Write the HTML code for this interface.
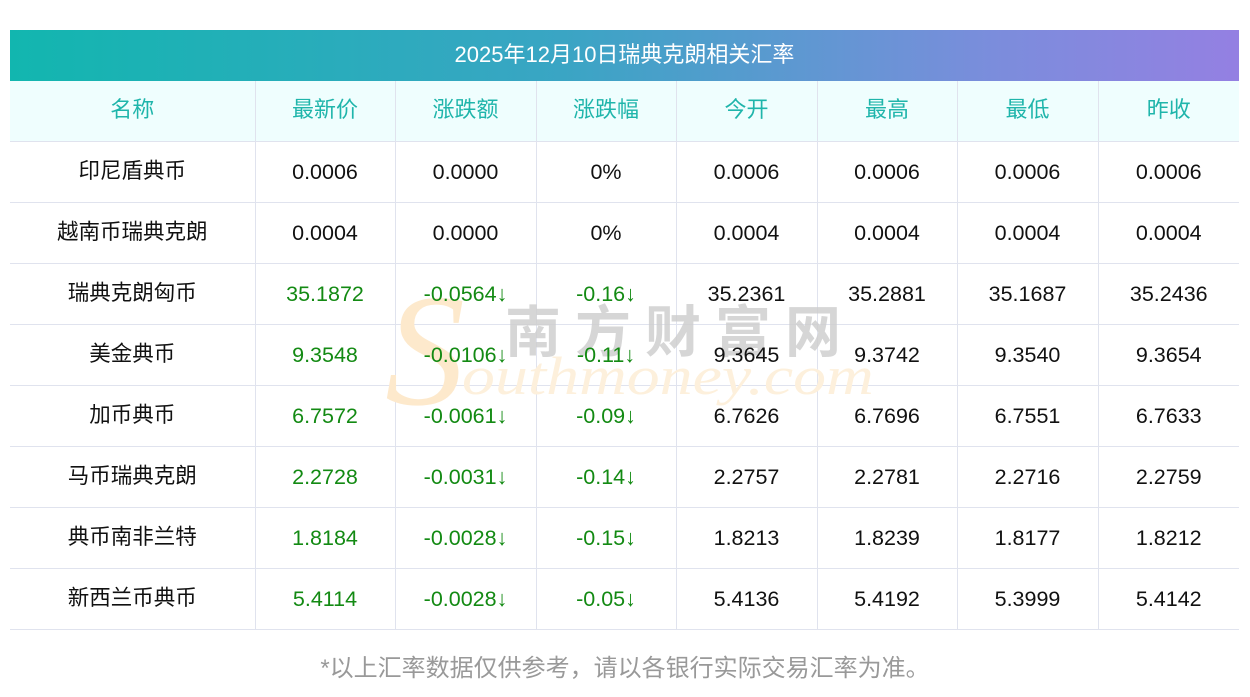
<!DOCTYPE html><html><head><meta charset="utf-8"><style>
body{margin:0;width:1250px;height:697px;background:#fff;font-family:"Liberation Sans","Noto Sans CJK SC",sans-serif;position:relative;overflow:hidden}
.bar{position:absolute;left:10px;top:30px;width:1229px;height:51px;background:linear-gradient(90deg,#12b6af,#3aa5c4 45%,#7b8ddc 80%,#9480e2);color:#fff;font-size:22px;line-height:49px;text-align:center}
table{position:absolute;left:10px;top:81px;border-collapse:collapse;width:1229px;table-layout:fixed}
td{height:60px;border:1px solid #e0e3ee;text-align:center;font-size:21.5px;color:#111;padding:0;position:relative;z-index:2}
tr td:first-child{border-left:none}tr td:last-child{border-right:none}
tr:first-child td{border-top:none;background:#effefe;color:#1fb5ab;font-size:22px}
.c span{position:relative;top:-3px}
.g{color:#138a13}
.wm1{position:absolute;left:505px;top:288px;font-size:56px;color:#cfcfcf;letter-spacing:14px;font-weight:bold;z-index:1;opacity:.85;font-family:"Noto Sans CJK SC",sans-serif}
.wm2{position:absolute;left:462px;top:345px;font-size:54px;font-family:"Liberation Serif",serif;font-style:italic;color:#fdf0dc;z-index:1;transform:scaleX(1.22);transform-origin:left top}
.S{position:absolute;left:385px;top:270px;font-size:160px;font-family:"Liberation Serif",serif;font-style:italic;color:#fde9cc;z-index:1;line-height:160px}
.note{position:absolute;top:648px;left:0;width:1250px;text-align:center;font-size:24px;color:#999}
</style></head><body>
<div class="bar">2025年12月10日瑞典克朗相关汇率</div>
<div class="S">S</div><div class="wm1">南方财富网</div><div class="wm2">outhmoney.com</div>
<table>
<colgroup><col style="width:245px"><col style="width:140px"><col style="width:141px"><col style="width:140px"><col style="width:141px"><col style="width:140px"><col style="width:141px"><col style="width:141px"></colgroup>
<tr class="c"><td><span>名称</span></td><td><span>最新价</span></td><td><span>涨跌额</span></td><td><span>涨跌幅</span></td><td><span>今开</span></td><td><span>最高</span></td><td><span>最低</span></td><td><span>昨收</span></td></tr>
<tr><td class="c"><span>印尼盾典币</span></td><td>0.0006</td><td>0.0000</td><td>0%</td><td>0.0006</td><td>0.0006</td><td>0.0006</td><td>0.0006</td></tr>
<tr><td class="c"><span>越南币瑞典克朗</span></td><td>0.0004</td><td>0.0000</td><td>0%</td><td>0.0004</td><td>0.0004</td><td>0.0004</td><td>0.0004</td></tr>
<tr><td class="c"><span>瑞典克朗匈币</span></td><td class="g">35.1872</td><td class="g">-0.0564↓</td><td class="g">-0.16↓</td><td>35.2361</td><td>35.2881</td><td>35.1687</td><td>35.2436</td></tr>
<tr><td class="c"><span>美金典币</span></td><td class="g">9.3548</td><td class="g">-0.0106↓</td><td class="g">-0.11↓</td><td>9.3645</td><td>9.3742</td><td>9.3540</td><td>9.3654</td></tr>
<tr><td class="c"><span>加币典币</span></td><td class="g">6.7572</td><td class="g">-0.0061↓</td><td class="g">-0.09↓</td><td>6.7626</td><td>6.7696</td><td>6.7551</td><td>6.7633</td></tr>
<tr><td class="c"><span>马币瑞典克朗</span></td><td class="g">2.2728</td><td class="g">-0.0031↓</td><td class="g">-0.14↓</td><td>2.2757</td><td>2.2781</td><td>2.2716</td><td>2.2759</td></tr>
<tr><td class="c"><span>典币南非兰特</span></td><td class="g">1.8184</td><td class="g">-0.0028↓</td><td class="g">-0.15↓</td><td>1.8213</td><td>1.8239</td><td>1.8177</td><td>1.8212</td></tr>
<tr><td class="c"><span>新西兰币典币</span></td><td class="g">5.4114</td><td class="g">-0.0028↓</td><td class="g">-0.05↓</td><td>5.4136</td><td>5.4192</td><td>5.3999</td><td>5.4142</td></tr>
</table>
<div class="note">*以上汇率数据仅供参考，请以各银行实际交易汇率为准。</div>
</body></html>
